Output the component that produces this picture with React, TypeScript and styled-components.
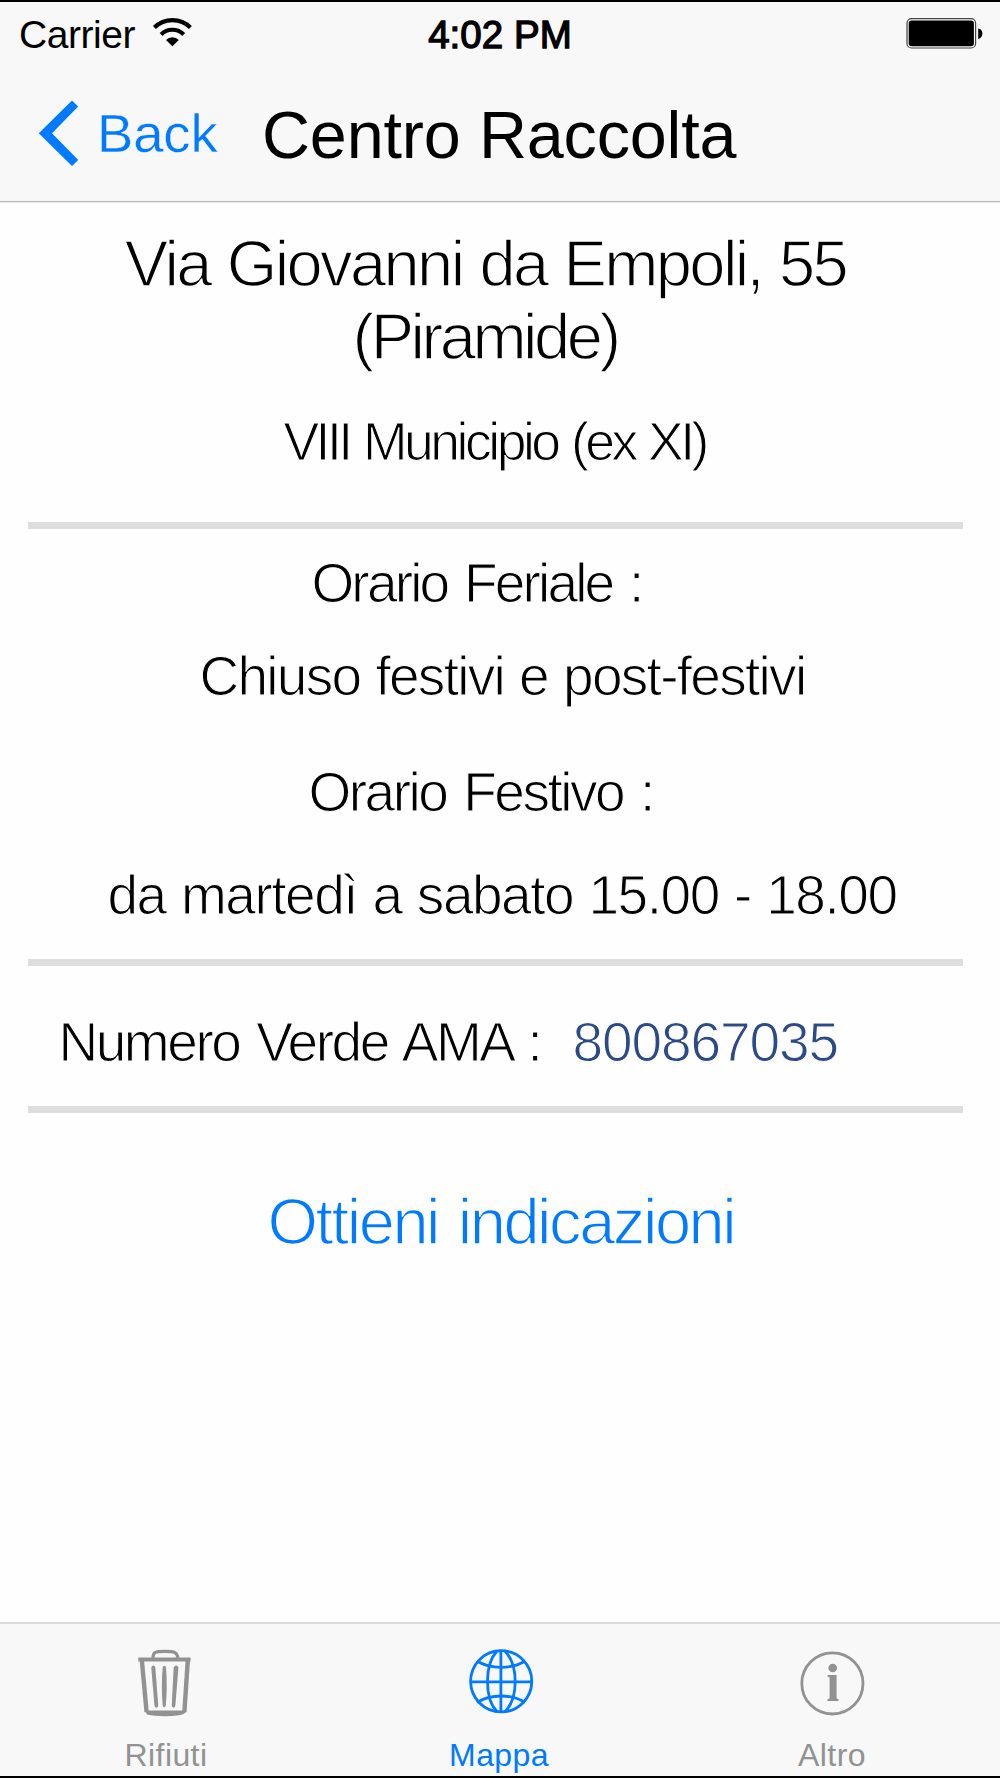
import React from 'react';
import styled, { createGlobalStyle } from 'styled-components';

const blue = '#007aff';
const gray = '#929292';
const barBg = '#f8f8f8';

const GlobalStyle = createGlobalStyle`
  * { box-sizing: border-box; }
  body {
    margin: 0;
    background: #fefefe;
    color: #000;
    font-family: "Liberation Sans", Arial, Helvetica, sans-serif;
  }
  button { font: inherit; border: 0; margin: 0; padding: 0; background: none; }
  svg { display: block; flex: none; }
`;

const Screen = styled.div`
  width: 1000px;
  height: 1778px;
  display: flex;
  flex-direction: column;
  overflow: hidden;
  border-top: 2px solid #000;
  border-bottom: 2px solid #000;
  background: #fefefe;
`;

const Header = styled.header`
  height: 201px;
  flex: none;
  background: ${barBg};
  border-bottom: 1px solid #e9e9e9;
  box-shadow: inset 0 -1px 0 #b9b9b9;
`;

const StatusBar = styled.div`
  display: flex;
  height: 60px;
  padding: 12px 16px 0 19px;
  font-size: 39px;
  line-height: 40px;
  white-space: nowrap;
`;

const StatusSide = styled.div<{ $end?: boolean }>`
  flex: 1;
  display: flex;
  justify-content: ${(p) => (p.$end ? 'flex-end' : 'flex-start')};
`;

const Carrier = styled.span`
  width: 132px;
  padding-top: 1px;
  letter-spacing: -0.45px;
`;

const Clock = styled.span`
  padding-top: 1px;
  font-size: 38.5px;
  letter-spacing: 0.05px;
  -webkit-text-stroke: 1.3px #000;
  margin-right: 3px;
`;

const NavBar = styled.nav`
  display: flex;
  height: 139px;
  padding-left: 36px;
  white-space: nowrap;
`;

const BackButton = styled.button`
  display: flex;
  align-items: flex-start;
  width: 226px;
  color: ${blue};
  font-size: 54.5px;
  line-height: 60px;
  letter-spacing: -0.17px;
  -webkit-text-stroke: 0.4px ${barBg};

  span { margin: 42px 0 0 13px; }
  svg { margin-top: 34px; }
`;

const Title = styled.h1`
  margin: 36px 0 0;
  font-size: 66.5px;
  font-weight: 400;
  line-height: 74px;
  letter-spacing: -0.165px;
`;

const Content = styled.main`
  flex: 1;
  display: flex;
  flex-direction: column;
`;

type LineProps = { $left: number; $track: number; $top?: number; $size?: number; $gap?: number };

const Line = styled.p<LineProps>`
  margin: ${(p) => p.$top ?? 0}px 0 0;
  padding-left: ${(p) => p.$left}px;
  font-size: ${(p) => p.$size ?? 55}px;
  line-height: 60px;
  letter-spacing: ${(p) => p.$track}px;
  word-spacing: ${(p) => p.$gap ?? 4}px;
  white-space: nowrap;
  -webkit-text-stroke: 1.1px #fefefe;
`;

const LargeLine = styled(Line)`
  font-size: 65px;
  line-height: 73px;
  -webkit-text-stroke: 1.4px #fefefe;
`;

const Divider = styled.hr<{ $top: number }>`
  width: 935px;
  height: 7px;
  flex: none;
  margin: ${(p) => p.$top}px 0 0 28px;
  border: 0;
  background: #dedede;
`;

const PhoneRow = styled.div`
  display: flex;
  margin-top: 46px;
`;

const PhoneLabel = styled(Line)`
  width: 572px;
`;

const Phone = styled(Line)`
  color: #2c4a84;
`;

const Directions = styled(LargeLine)`
  color: ${blue};
`;

const TabBar = styled.footer`
  display: grid;
  grid-template-columns: 334px 332px 334px;
  height: 154px;
  flex: none;
  background: ${barBg};
  border-top: 2px solid #d9d9d9;
`;

const Tab = styled.button<{ $active?: boolean }>`
  display: flex;
  flex-direction: column;
  align-items: center;
  padding: 16px 2px 0 0;
  color: ${(p) => (p.$active ? blue : gray)};
  font-size: 32px;
  line-height: 36px;
  letter-spacing: 0.4px;

  svg { margin-bottom: 17px; }
`;

const Wifi = () => (
  <svg width="42" height="34" viewBox="151 14 42 34" fill="none" stroke="#000" strokeWidth="4.2">
    <path d="M154.4 27.5A25.5 25.5 0 0 1 190.4 27.5" />
    <path d="M161.1 34.4A16 16 0 0 1 183.7 34.4" />
    <path d="M166 40A9 9 0 0 1 178.8 40L172.4 46.2Z" fill="#000" stroke="none" />
  </svg>
);

const Battery = () => (
  <svg width="80" height="36" viewBox="904 14 80 36">
    <rect x="907" y="18.7" width="68.6" height="29.3" rx="4.5" fill="none" stroke="#444" strokeWidth="1.2" />
    <rect x="908.7" y="20.4" width="65.2" height="25.9" rx="3" />
    <path d="M978.2 28.4C981 28.8 982.4 31 982.4 33.6S981 38.5 978.2 39Z" />
  </svg>
);

const Chevron = () => (
  <svg width="48" height="72" viewBox="36 96 48 72" fill={blue}>
    <path d="M38.8 133.3 72 100.6 78.2 106.6 52 133.3 78.2 160 72 166Z" />
  </svg>
);

const TrashIcon = () => (
  <svg width="80" height="80" viewBox="126 1640 80 80" fill="none" stroke={gray}>
    <path d="M153 1658C153 1652 155 1651.3 165 1651.3S177 1652.5 178 1658" strokeWidth="3.2" />
    <path d="M138.3 1659.5H190.6" strokeWidth="4" />
    <path d="M141.8 1660 146.6 1712" strokeWidth="4.4" />
    <path d="M187.8 1660 184.4 1712" strokeWidth="4.4" />
    <path d="M144.6 1710.5H186.2C186 1713.5 183 1714.5 179 1715.2 168 1716.8 155 1716.3 147 1714.5Z" fill={gray} stroke="none" />
    <g fill={gray} stroke="none">
      <path d="M151.3 1668C151.5 1664.5 155 1664.5 155.4 1668L158.2 1705C158 1708.5 154.8 1708.5 154.4 1705Z" />
      <path d="M162.6 1668C163 1665 165.6 1665 166 1668 167 1680 167 1693 165.8 1705 165.4 1708 163 1708 162.6 1705 161.6 1693 161.6 1680 162.6 1668Z" />
      <path d="M173.6 1668C174 1664.5 178.4 1664.5 178.4 1668L175.4 1705C175 1708.5 172 1708.5 171.8 1705Z" />
    </g>
  </svg>
);

const GlobeIcon = () => (
  <svg width="80" height="80" viewBox="459 1640 80 80" fill="none" stroke={blue} strokeWidth="2.8">
    <circle cx="501.2" cy="1681.3" r="30.6" />
    <path d="M500.9 1650V1712.5M470 1681.8H532" />
    <path d="M497 1651C490.5 1658 487.5 1667 487.5 1681.5S490.5 1705 497 1711.8" />
    <path d="M505 1651C511.5 1658 515.2 1667 515.2 1681.5S511.5 1705 505 1711.8" />
    <path d="M477 1661C484 1665.5 490 1667.3 501 1667.3S518 1665.5 525 1661" />
    <path d="M477 1702.5C484 1698 490 1696 501 1696S518 1698 525 1702.5" />
  </svg>
);

const InfoIcon = () => (
  <svg width="80" height="80" viewBox="792 1640 80 80" fill={gray}>
    <circle cx="832.4" cy="1683.4" r="30.6" fill="none" stroke={gray} strokeWidth="2.8" />
    <circle cx="832.7" cy="1668" r="4.3" />
    <path d="M827.6 1675H836.6V1698.3L838.6 1699.4V1701H827.4V1699.4L829.6 1698.3V1677.6L827.6 1676.8Z" />
  </svg>
);

export default function App() {
  return (
    <>
      <GlobalStyle />
      <Screen>
        <Header>
          <StatusBar>
            <StatusSide>
              <Carrier>Carrier</Carrier>
              <Wifi />
            </StatusSide>
            <Clock>4:02 PM</Clock>
            <StatusSide $end>
              <Battery />
            </StatusSide>
          </StatusBar>
          <NavBar>
            <BackButton>
              <Chevron />
              <span>Back</span>
            </BackButton>
            <Title>Centro Raccolta</Title>
          </NavBar>
        </Header>
        <Content>
          <LargeLine $left={124.8} $track={-2.6} $top={24} $gap={1.5}>Via Giovanni da Empoli, 55</LargeLine>
          <LargeLine $left={352.5} $track={-3.46}>(Piramide)</LargeLine>
          <Line $left={283.4} $track={-3.5} $top={39} $size={53.5} $gap={2}>VIII Municipio (ex XI)</Line>
          <Divider $top={50} />
          <Line $left={311.4} $track={-2.8} $top={24}>Orario Feriale :</Line>
          <Line $left={199.4} $track={-1.71} $top={33} $gap={1.5}>Chiuso festivi e post-festivi</Line>
          <Line $left={308.4} $track={-2.476} $top={56}>Orario Festivo :</Line>
          <Line $left={107.4} $track={-1.47} $top={43} $gap={1.5}>da martedì a sabato 15.00 - 18.00</Line>
          <Divider $top={34} />
          <PhoneRow>
            <PhoneLabel $left={58.4} $track={-2.43}>Numero Verde AMA :</PhoneLabel>
            <Phone $left={0.4} $track={-1.06}>800867035</Phone>
          </PhoneRow>
          <Divider $top={34} />
          <Directions $left={267.4} $track={-2.45} $top={72}>Ottieni indicazioni</Directions>
        </Content>
        <TabBar>
          <Tab><TrashIcon />Rifiuti</Tab>
          <Tab $active><GlobeIcon />Mappa</Tab>
          <Tab><InfoIcon />Altro</Tab>
        </TabBar>
      </Screen>
    </>
  );
}
